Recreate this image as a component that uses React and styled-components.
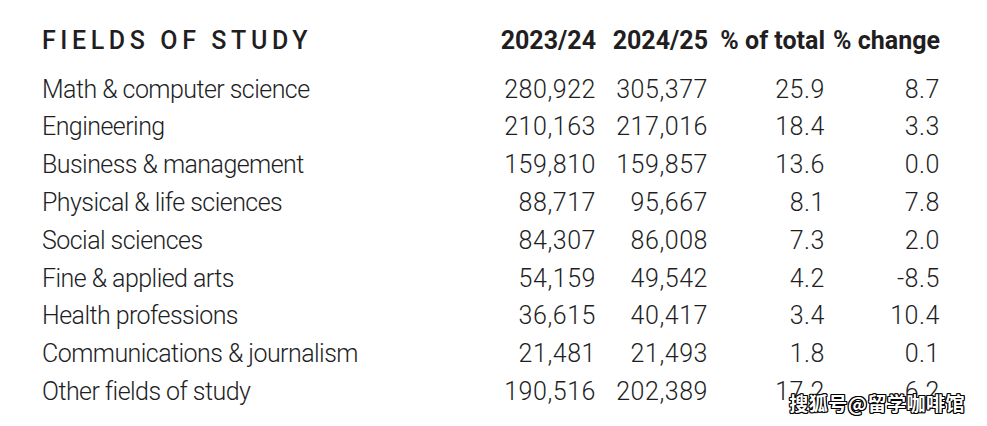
import styled, { createGlobalStyle } from 'styled-components'

const GlobalStyle = createGlobalStyle`
  html, body {
    margin: 0;
    padding: 0;
    background: #ffffff;
  }
  body {
    font-family: Roboto, "Noto Sans", sans-serif;
  }
`

const Page = styled.div`
  position: relative;
  width: 987px;
  height: 426px;
  overflow: hidden;
  background: #ffffff;
  color: #221e1f;
  box-sizing: border-box;
  padding: 18px 0 0 42px;
`

const Table = styled.div`
  display: grid;
  grid-template-columns: 450px 104px 112px 117px 115px;
  grid-template-rows: 48.8px;
  grid-auto-rows: 37.8px;
  align-items: end;
`

const Title = styled.div`
  font-size: 25px;
  font-weight: 500;
  letter-spacing: 4.6px;
  text-transform: uppercase;
  line-height: 30px;
  margin-bottom: 11px;
`

const HeadCell = styled.div`
  font-size: 25px;
  font-weight: 700;
  text-align: right;
  line-height: 30px;
  white-space: nowrap;
  margin-bottom: 11px;
`

const Label = styled.div`
  font-size: 25px;
  font-weight: 300;
  letter-spacing: -0.55px;
  white-space: nowrap;
  line-height: 30px;
`

const Num = styled.div`
  font-size: 25px;
  font-weight: 300;
  letter-spacing: 0.55px;
  text-align: right;
  white-space: nowrap;
  line-height: 30px;
`

const Watermark = styled.div`
  position: absolute;
  right: 22px;
  bottom: 10px;
  font-family: "Noto Sans CJK SC", sans-serif;
  font-size: 19px;
  font-weight: 700;
  color: #ffffff;
  letter-spacing: 0.5px;
  text-shadow:
    1px 1px 0 #000, -1px -1px 0 #000, 1px -1px 0 #000, -1px 1px 0 #000,
    1px 0 0 #000, -1px 0 0 #000, 0 1px 0 #000, 0 -1px 0 #000;
`

const rows = [
  ['Math & computer science', '280,922', '305,377', '25.9', '8.7'],
  ['Engineering', '210,163', '217,016', '18.4', '3.3'],
  ['Business & management', '159,810', '159,857', '13.6', '0.0'],
  ['Physical & life sciences', '88,717', '95,667', '8.1', '7.8'],
  ['Social sciences', '84,307', '86,008', '7.3', '2.0'],
  ['Fine & applied arts', '54,159', '49,542', '4.2', '-8.5'],
  ['Health professions', '36,615', '40,417', '3.4', '10.4'],
  ['Communications & journalism', '21,481', '21,493', '1.8', '0.1'],
  ['Other fields of study', '190,516', '202,389', '17.2', '6.2'],
]

export default function App() {
  return (
    <Page>
      <GlobalStyle />
      <Table>
        <Title>Fields of study</Title>
        <HeadCell>2023/24</HeadCell>
        <HeadCell>2024/25</HeadCell>
        <HeadCell>% of total</HeadCell>
        <HeadCell>% change</HeadCell>
        {rows.map(r => [
          <Label key={r[0]}>{r[0]}</Label>,
          <Num key={r[0] + '1'}>{r[1]}</Num>,
          <Num key={r[0] + '2'}>{r[2]}</Num>,
          <Num key={r[0] + '3'}>{r[3]}</Num>,
          <Num key={r[0] + '4'}>{r[4]}</Num>,
        ])}
      </Table>
      <Watermark>搜狐号@留学咖啡馆</Watermark>
    </Page>
  )
}
